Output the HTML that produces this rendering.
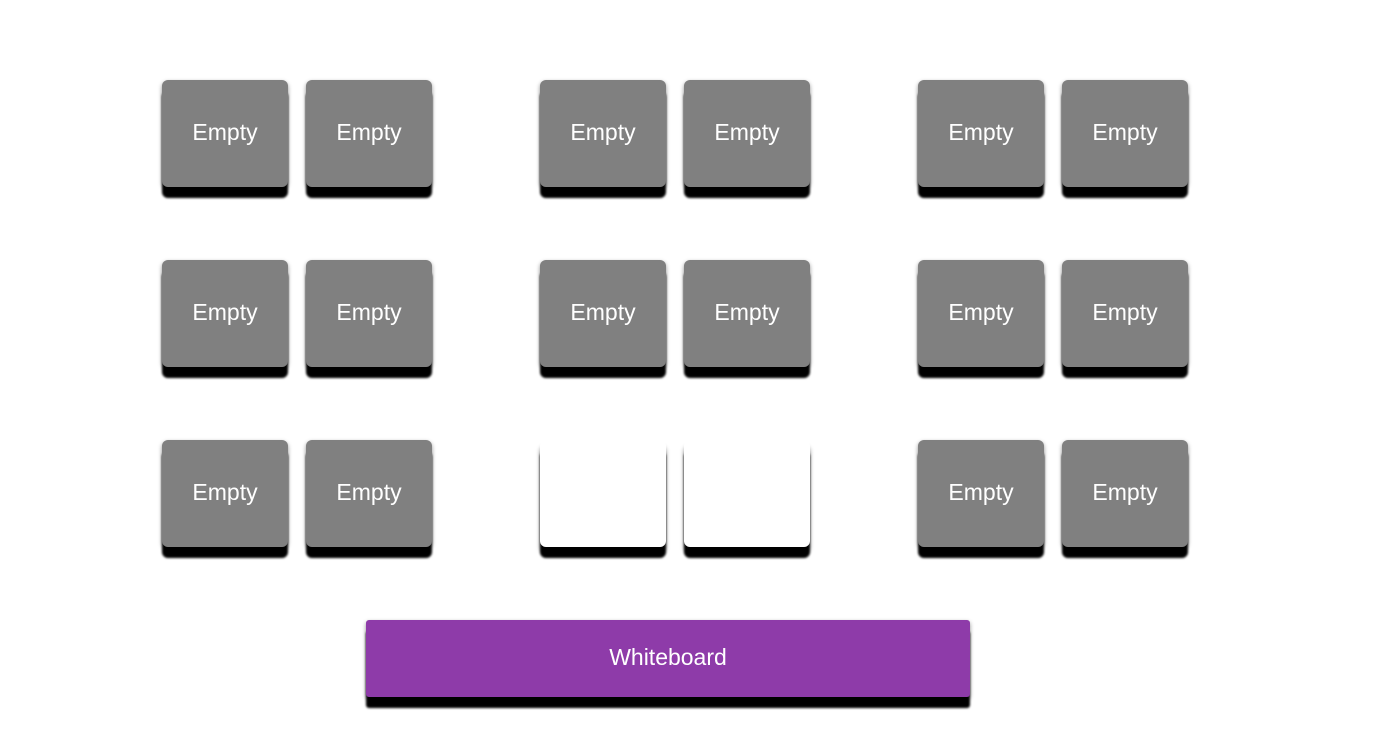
<!DOCTYPE html>
<html><head><style>
body{margin:0;width:1374px;height:756px;background:#fff;position:relative;overflow:hidden;font-family:"Liberation Sans",sans-serif}
.d{position:absolute;width:126px;height:107px;background:#808080;border-radius:6px;color:#fff;font-size:23px;display:flex;align-items:center;justify-content:center;padding-bottom:2px;box-sizing:border-box;box-shadow:0 11px 2px #000,0 2px 4px rgba(0,0,0,.45)}
.w{background:#fff;color:#fff;box-shadow:0 11px 2px #000,0 6px 4px rgba(0,0,0,.45)}
.wb{position:absolute;left:366px;top:620px;width:604px;height:77px;background:#8e3ba9;border-radius:3px;color:#fff;font-size:23px;display:flex;align-items:center;justify-content:center;padding-bottom:2px;box-sizing:border-box;box-shadow:0 11px 2px #000,0 2px 4px rgba(0,0,0,.45)}
</style></head><body>
<div class="d" style="left:162px;top:80px">Empty</div>
<div class="d" style="left:306px;top:80px">Empty</div>
<div class="d" style="left:540px;top:80px">Empty</div>
<div class="d" style="left:684px;top:80px">Empty</div>
<div class="d" style="left:918px;top:80px">Empty</div>
<div class="d" style="left:1062px;top:80px">Empty</div>
<div class="d" style="left:162px;top:260px">Empty</div>
<div class="d" style="left:306px;top:260px">Empty</div>
<div class="d" style="left:540px;top:260px">Empty</div>
<div class="d" style="left:684px;top:260px">Empty</div>
<div class="d" style="left:918px;top:260px">Empty</div>
<div class="d" style="left:1062px;top:260px">Empty</div>
<div class="d" style="left:162px;top:440px">Empty</div>
<div class="d" style="left:306px;top:440px">Empty</div>
<div class="d w" style="left:540px;top:440px"></div>
<div class="d w" style="left:684px;top:440px"></div>
<div class="d" style="left:918px;top:440px">Empty</div>
<div class="d" style="left:1062px;top:440px">Empty</div>
<div class="wb">Whiteboard</div>
</body></html>
